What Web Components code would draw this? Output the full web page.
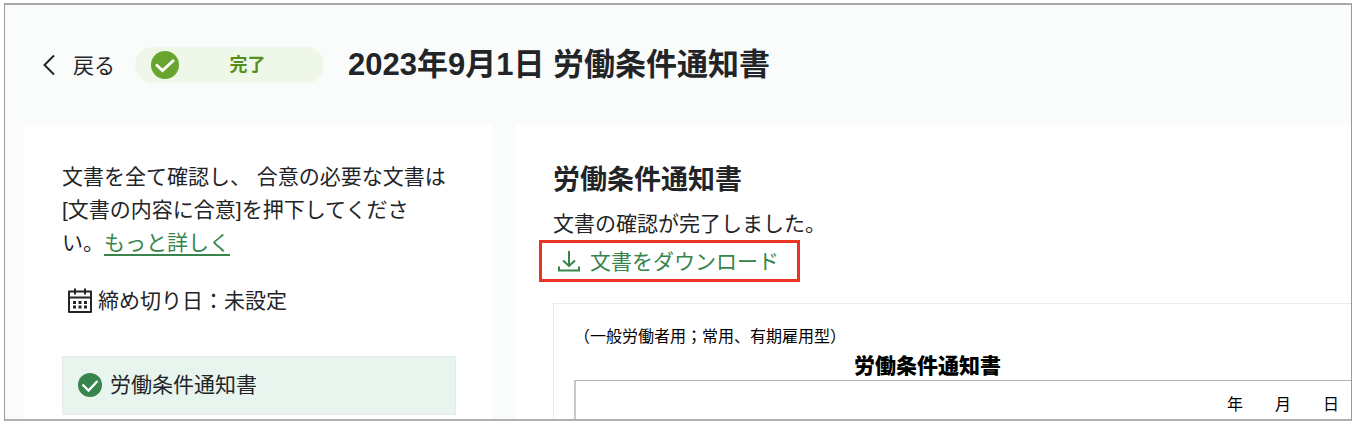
<!DOCTYPE html>
<html lang="ja">
<head>
<meta charset="utf-8">
<title>労働条件通知書</title>
<style>
    html { height: 100%; }
    body {
        box-sizing: border-box;
        height: 100%;
        margin: 0;
        padding: 3px 10px 9px 4px;
        display: flex;
        background: #fff;
        color: #222427;
        font: 21px/33px "Liberation Sans", "Noto Sans CJK JP", sans-serif;
        text-spacing-trim: space-all;
        --green: #37854d;
        --surface: #fafcfb;
    }
    p { margin: 0; }
    p a {
        color: var(--green);
        text-underline-offset: 4px;
        text-decoration-thickness: 2px;
    }
</style>
</head>
<body>
<app-window>
    <page-header slot="header" heading="2023年9月1日 労働条件通知書">
        <status-badge>完了</status-badge>
    </page-header>
    <side-panel slot="side">
        <p slot="intro">文書を全て確認し、 合意の必要な文書は[文書の内容に合意]を押下してください。<a href="#more">もっと詳しく</a></p>
        <span slot="deadline">締め切り日：未設定</span>
        <document-item>労働条件通知書</document-item>
    </side-panel>
    <document-panel heading="労働条件通知書">
        <p slot="status">文書の確認が完了しました。</p>
        <download-link slot="action">文書をダウンロード</download-link>
        <document-preview heading="労働条件通知書">
            <p slot="kind">（一般労働者用；常用、有期雇用型）</p>
            <span>年　　月　　日</span>
        </document-preview>
    </document-panel>
</app-window>

<script>
class AppWindow extends HTMLElement {
    connectedCallback() {
        this.attachShadow({mode: "open"})
        this.shadowRoot.innerHTML = `
            <style>
                :host {
                    flex: 1;
                    min-width: 0;
                    display: flex;
                    flex-direction: column;
                    overflow: hidden;
                    border: 1px solid #999;
                    border-top: 2px solid #a8a8a8;
                    border-bottom: 2px solid #b0b0b0;
                    background: var(--surface);
                }
                .columns {
                    flex: 1;
                    display: grid;
                    grid-template-columns: minmax(0, 468px) minmax(0, 1fr);
                    gap: 24px;
                    padding-left: 19px;
                }
            </style>
            <slot name="header"></slot>
            <div class="columns">
                <slot name="side"></slot>
                <slot></slot>
            </div>
        `;
    }
}

class PageHeader extends HTMLElement {
    connectedCallback() {
        this.attachShadow({mode: "open"})
        this.shadowRoot.innerHTML = `
            <style>
                :host {
                    display: flex;
                    align-items: center;
                    padding: 40px 36px;
                }
                button {
                    display: flex;
                    align-items: center;
                    gap: 16px;
                    margin-right: 20px;
                    padding: 0;
                    border: 0;
                    background: none;
                    color: inherit;
                    font: inherit;
                    cursor: pointer;
                }
                h1 {
                    margin: 0 0 0 24px;
                    font-size: 31px;
                    line-height: 40px;
                    white-space: nowrap;
                }
            </style>
            <button type="button">
                <svg width="16" height="22" viewBox="0 0 16 22" fill="none" stroke="currentColor" stroke-width="2" aria-hidden="true">
                    <path d="M13 1.5 L3.5 11 L13 20.5"/>
                </svg>
                戻る
            </button>
            <slot></slot>
            <h1>${this.getAttribute("heading")}</h1>
        `;
    }
}

class StatusBadge extends HTMLElement {
    connectedCallback() {
        this.attachShadow({mode: "open"})
        this.shadowRoot.innerHTML = `
            <style>
                :host {
                    box-sizing: border-box;
                    flex: none;
                    display: grid;
                    grid-template-columns: 28px 1fr;
                    align-items: center;
                    width: 189px;
                    height: 36px;
                    padding: 0 16px;
                    border-radius: 18px;
                    background: #eff8e8;
                    color: #538f1f;
                    font-size: 18px;
                    line-height: 36px;
                    font-weight: bold;
                }
                .label {
                    padding-left: 8px;
                    text-align: center;
                }
            </style>
            <svg width="28" height="28" viewBox="0 0 28 28" aria-hidden="true">
                <circle cx="14" cy="14" r="14" fill="#68a52f"/>
                <path d="M5 13.5 L11.5 19.5 L23 9" fill="none" stroke="#fff" stroke-width="2.8"/>
            </svg>
            <span class="label"><slot></slot></span>
        `;
    }
}

class SidePanel extends HTMLElement {
    connectedCallback() {
        this.attachShadow({mode: "open"})
        this.shadowRoot.innerHTML = `
            <style>
                :host {
                    display: block;
                    padding: 35px 36px 0 38px;
                    background: #fff;
                }
                .intro { padding-right: 6px; }
                .deadline {
                    display: flex;
                    align-items: center;
                    gap: 6px;
                    margin: 25px 0 39px;
                    padding-left: 5px;
                }
            </style>
            <div class="intro"><slot name="intro"></slot></div>
            <div class="deadline">
                <svg width="25" height="25" viewBox="0 0 25 25" fill="none" stroke="currentColor" stroke-width="2" aria-hidden="true">
                    <path d="M2 3.5 H24 V24 H2 Z M2 9.5 H24" stroke-linejoin="round"/>
                    <path d="M8 0.5 V6.5 M18 0.5 V6.5"/>
                    <path d="M6 14.5 H9 M11.5 14.5 H14.5 M17 14.5 H20 M6 19 H9 M11.5 19 H14.5 M17 19 H20" stroke-width="2.8"/>
                </svg>
                <slot name="deadline"></slot>
            </div>
            <slot></slot>
        `;
    }
}

class DocumentItem extends HTMLElement {
    connectedCallback() {
        this.attachShadow({mode: "open"})
        this.shadowRoot.innerHTML = `
            <style>
                :host { display: block; }
                button {
                    display: flex;
                    align-items: center;
                    gap: 8px;
                    width: 100%;
                    padding: 11px 15px 13px;
                    border: 1px solid #e6ebe8;
                    background: #e8f5ee;
                    color: inherit;
                    font: inherit;
                    text-align: left;
                    cursor: pointer;
                }
            </style>
            <button type="button">
                <svg width="24" height="24" viewBox="0 0 24 24" aria-hidden="true">
                    <circle cx="12" cy="12" r="12" fill="#37854d"/>
                    <path d="M4.5 11.5 L10.5 17.5 L19.5 8" fill="none" stroke="#fff" stroke-width="2.3"/>
                </svg>
                <slot></slot>
            </button>
        `;
    }
}

class DocumentPanel extends HTMLElement {
    connectedCallback() {
        this.attachShadow({mode: "open"})
        this.shadowRoot.innerHTML = `
            <style>
                :host {
                    display: flex;
                    flex-direction: column;
                    padding: 35px 0 0 37px;
                    background: #fff;
                }
                h2 {
                    margin: 0 0 7px;
                    font-size: 27px;
                    line-height: 40px;
                }
            </style>
            <h2>${this.getAttribute("heading")}</h2>
            <slot name="status"></slot>
            <slot name="action"></slot>
            <slot></slot>
        `;
    }
}

class DownloadLink extends HTMLElement {
    connectedCallback() {
        this.attachShadow({mode: "open"})
        this.shadowRoot.innerHTML = `
            <style>
                :host {
                    display: block;
                    margin: 0 0 21px -14px;
                }
                a {
                    box-sizing: border-box;
                    display: inline-flex;
                    align-items: center;
                    gap: 10px;
                    height: 42px;
                    padding: 0 18px 0 16px;
                    border: 3px solid #ea3423;
                    vertical-align: top;
                    color: var(--green);
                    text-decoration: none;
                }
            </style>
            <a href="#download">
                <svg width="22" height="22" viewBox="0 0 22 22" fill="none" stroke="currentColor" stroke-width="2" aria-hidden="true">
                    <path d="M11 1 V16 M5 10.5 L11 16 L17 10.5"/>
                    <path d="M1 16.5 V20.5 H21 V16.5"/>
                </svg>
                <slot></slot>
            </a>
        `;
    }
}

class DocumentPreview extends HTMLElement {
    connectedCallback() {
        this.attachShadow({mode: "open"})
        this.shadowRoot.innerHTML = `
            <style>
                :host {
                    flex: 1;
                    display: flex;
                    flex-direction: column;
                    padding: 21px 0 0 20px;
                    border: solid #ececec;
                    border-width: 1px 0 0 1px;
                    color: #000;
                    font-size: 16px;
                    line-height: 24px;
                }
                h3 {
                    margin: 3px 70px 0 0;
                    font-size: 21px;
                    line-height: 28px;
                    font-weight: 900;
                    text-align: center;
                }
                .form {
                    flex: 1;
                    padding: 12px 12px 0;
                    border-top: 1px solid #b4b4b4;
                    border-left: 2px solid #c8c8c8;
                    text-align: right;
                }
            </style>
            <slot name="kind"></slot>
            <h3>${this.getAttribute("heading")}</h3>
            <div class="form"><slot></slot></div>
        `;
    }
}

window.customElements.define('app-window', AppWindow);
window.customElements.define('page-header', PageHeader);
window.customElements.define('status-badge', StatusBadge);
window.customElements.define('side-panel', SidePanel);
window.customElements.define('document-item', DocumentItem);
window.customElements.define('document-panel', DocumentPanel);
window.customElements.define('download-link', DownloadLink);
window.customElements.define('document-preview', DocumentPreview);
</script>
</body>
</html>
